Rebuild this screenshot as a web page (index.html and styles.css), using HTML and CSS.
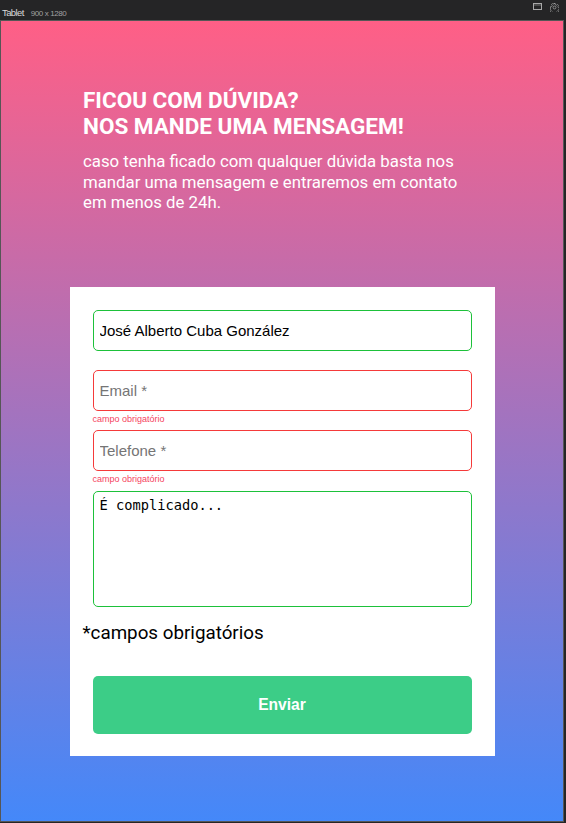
FILE: index.html
```html
<!DOCTYPE html>
<html lang="pt-BR">
<head>
<meta charset="utf-8">
<title>Contato</title>
<link rel="stylesheet" href="styles.css">
</head>
<body>
<div class="device">
  <div class="topbar">
    <div class="device-label"><span class="device-name">Tablet</span><span class="device-size">900 x 1280</span></div>
    <div class="device-tools">
      <svg class="tool" width="9" height="7" viewBox="0 0 9 7"><rect x="0.5" y="0.5" width="8" height="6" fill="none" stroke="#a8a8a8" stroke-width="1"/><line x1="1" y1="2" x2="8" y2="2" stroke="#a8a8a8" stroke-width="0.6"/></svg>
      <svg class="tool" width="9" height="9" viewBox="0 0 10 10"><path d="M4.2 0.5h1.6l0.3 1.4 1.2 0.6 1.2-0.8 1.1 1.1-0.8 1.2 0.6 1.2 1.4 0.3v1.6l-1.4 0.3-0.6 1.2 0.8 1.2-1.1 1.1-1.2-0.8-1.2 0.6-0.3 1.4H4.2l-0.3-1.4-1.2-0.6-1.2 0.8-1.1-1.1 0.8-1.2-0.6-1.2L0.5 5.8V4.2l1.4-0.3 0.6-1.2-0.8-1.2 1.1-1.1 1.2 0.8 1.2-0.6z" fill="none" stroke="#a8a8a8" stroke-width="0.8"/><circle cx="5" cy="5" r="1.6" fill="none" stroke="#a8a8a8" stroke-width="0.8"/></svg>
    </div>
  </div>
  <div class="viewport">
    <header class="intro">
      <h1 class="title">FICOU COM DÚVIDA?<br>NOS MANDE UMA MENSAGEM!</h1>
      <p class="lead">caso tenha ficado com qualquer dúvida basta nos mandar uma mensagem e entraremos em contato em menos de 24h.</p>
    </header>
    <form class="card">
      <input class="field field-ok" type="text" value="José Alberto Cuba González">
      <input class="field field-error gap-none" type="email" placeholder="Email *">
      <div class="error">campo obrigatório</div>
      <input class="field field-error gap-none" type="tel" placeholder="Telefone *">
      <div class="error">campo obrigatório</div>
      <textarea class="field field-ok message">É complicado...</textarea>
      <p class="note">*campos obrigatórios</p>
      <button class="send" type="button">Enviar</button>
    </form>
  </div>
</div>
</body>
</html>
```
FILE: styles.css
```css
* { box-sizing: border-box; }
html, body { margin: 0; padding: 0; }
body { background: #252526; width: 566px; height: 823px; overflow: hidden; }

.device { display: flex; flex-direction: column; height: 823px; }

.topbar {
  height: 20px;
  display: flex;
  justify-content: space-between;
  align-items: flex-start;
  padding: 2px 7px 0 2px;
  font-family: "Liberation Sans", Arial, sans-serif;
}
.device-name { color: #d8d8d8; font-size: 9.5px; letter-spacing: -0.6px; }
.device-size { color: #a0a0a0; font-size: 8px; margin-left: 7px; letter-spacing: -0.4px; }
.device-tools { display: flex; gap: 8px; padding-top: 1px; }
.tool { display: block; }

.viewport {
  width: 564px;
  height: 802px;
  border: 1px solid #565656;
  background: linear-gradient(to bottom, #ff5f86 0%, #4488f9 100%);
  padding-top: 66px;
}

.intro { padding: 0 95px 0 82px; color: #fff; font-family: Roboto, "Noto Sans", sans-serif; }
.title {
  margin: 0 0 12px;
  font-size: 22.5px;
  line-height: 26px;
  font-weight: 700;
}
.lead {
  margin: 0;
  font-size: 16.8px;
  line-height: 20.5px;
  font-weight: 400;
}

.card {
  width: 425px;
  margin: 74px auto 0;
  background: #fff;
  padding: 23px 13px 22px;
  display: flex;
  flex-direction: column;
}

.field {
  display: block;
  margin: 0 10px 19px;
  height: 41px;
  border-radius: 5px;
  border: 1px solid;
  padding: 0 6px;
  font-family: "Liberation Sans", Arial, sans-serif;
  font-size: 15px;
  color: #000;
  background: #fff;
  outline: none;
}
.field::placeholder { color: #757575; }
.field-ok { border-color: #1dc13a; }
.field-error { border-color: #f53a3a; }
.gap-none { margin-bottom: 0; }

.error {
  height: 19.5px;
  margin: 0 10px;
  padding-top: 3px;
  font-family: "Liberation Sans", Arial, sans-serif;
  font-size: 9px;
  line-height: 10px;
  color: #f5455f;
}

.message {
  height: 116px;
  margin-bottom: 0;
  padding: 5px 6px;
  resize: none;
  font-family: "DejaVu Sans Mono", monospace;
  font-size: 13.7px;
  line-height: 16px;
}

.note {
  margin: 15.5px 0 0;
  font-family: Roboto, "Noto Sans", sans-serif;
  font-size: 18.8px;
  line-height: 23.5px;
  color: #000;
}

.send {
  margin: 30px 10px 0;
  height: 58px;
  border: none;
  border-radius: 5px;
  background: #3ccd87;
  color: #fff;
  font-family: "Liberation Sans", Arial, sans-serif;
  font-weight: 700;
  font-size: 15.6px;
  cursor: pointer;
}
```
